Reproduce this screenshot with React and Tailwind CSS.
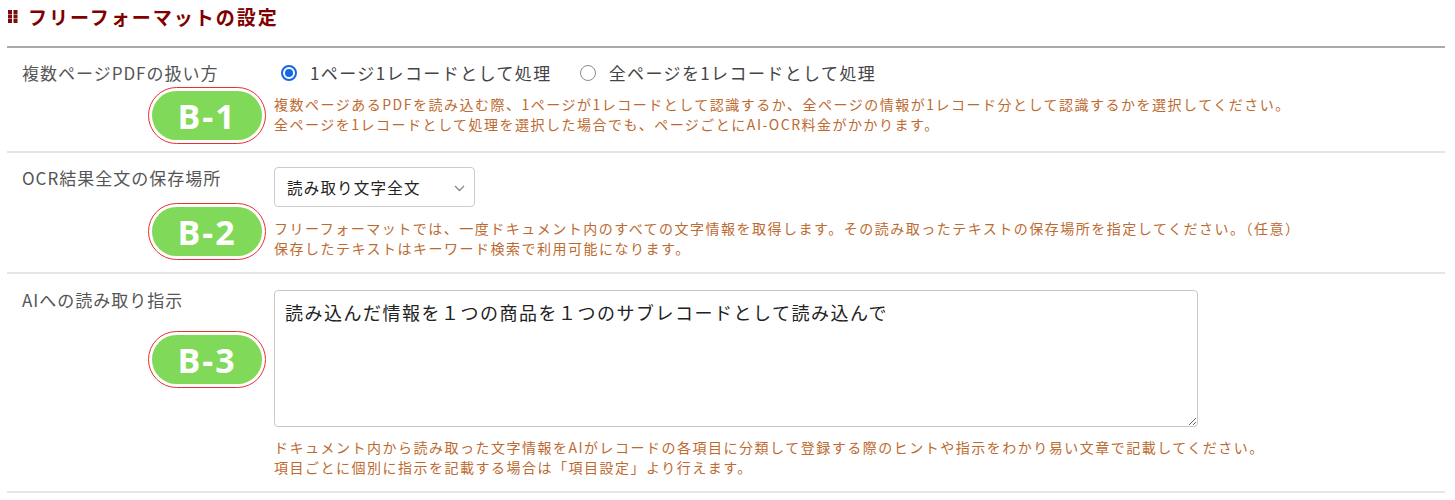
import React from "react";

const jp = { fontFamily: '"Noto Sans CJK JP", "Noto Sans", sans-serif' };

const Badge = ({ label, top }) => (
  <div
    className="absolute left-[141px] rounded-full border-[1.5px] border-[#e8322f] bg-white p-[3px]"
    style={{ top }}
  >
    <div className="flex h-[49px] w-[110px] items-center justify-center rounded-full bg-[#80d959]">
      <span
        className="text-[34px] font-bold leading-none tracking-[2px] text-white"
        style={{ fontFamily: '"Open Sans", "Liberation Sans", sans-serif' }}
      >
        {label}
      </span>
    </div>
  </div>
);

const Radio = ({ checked, children }) => (
  <label className="flex items-center">
    {checked ? (
      <span className="flex h-[16px] w-[16px] items-center justify-center rounded-full border-2 border-[#1467e6]">
        <span className="h-[8px] w-[8px] rounded-full bg-[#1467e6]" />
      </span>
    ) : (
      <span className="h-[16px] w-[16px] rounded-full border-[1.5px] border-[#8a8a8a]" />
    )}
    <span className="ml-[13px] text-[17px] leading-[26px] tracking-[1.4px] text-[#444]">
      {children}
    </span>
  </label>
);

const Help = ({ lines, className }) => (
  <div className={"text-[14px] leading-[20px] tracking-[1.5px] text-[#bd6a30] " + className}>
    {lines.map((l) => (
      <div key={l}>{l}</div>
    ))}
  </div>
);

const Row = ({ label, labelClass, badge, badgeTop, rowClass, children }) => (
  <div className={"relative flex border-b-2 border-[#e6e6e6] " + rowClass}>
    <div className="w-[267px] shrink-0 pl-[15px]">
      <div className={"text-[17px] leading-[22px] tracking-[1px] text-[#555] " + labelClass}>{label}</div>
    </div>
    <div className="flex-1">{children}</div>
    <Badge label={badge} top={badgeTop} />
  </div>
);

export default function App() {
  return (
    <div className="min-h-[500px] w-full bg-white" style={jp}>
      <div className="ml-[7px] w-[1438px]">
        <div className="flex h-[48px] items-start border-b-2 border-[#aaa] pt-[4px]">
          <svg width="10" height="13" viewBox="0 0 10 13" className="mt-[6px] ml-[1px]">
            {[0, 4.5, 9].map((y) =>
              [0, 5.5].map((x) => (
                <rect key={x + "-" + y} x={x} y={y} width="4" height="4" fill="#7a0d0d" />
              ))
            )}
          </svg>
          <h1 className="ml-[10px] text-[19px] font-bold leading-[26px] tracking-[2px] text-[#800000]">
            フリーフォーマットの設定
          </h1>
        </div>

        <Row label="複数ページPDFの扱い方" labelClass="mt-[2px]" badge="B-1" badgeTop={39} rowClass="pt-[12px] pb-[17px]">
          <div className="flex h-[26px] items-center pl-[7px]">
            <Radio checked>1ページ1レコードとして処理</Radio>
            <div className="w-[28px]" />
            <Radio>全ページを1レコードとして処理</Radio>
          </div>
          <Help
            className="mt-[8px]"
            lines={[
              "複数ページあるPDFを読み込む際、1ページが1レコードとして認識するか、全ページの情報が1レコード分として認識するかを選択してください。",
              "全ページを1レコードとして処理を選択した場合でも、ページごとにAI-OCR料金がかかります。",
            ]}
          />
        </Row>

        <Row label="OCR結果全文の保存場所" badge="B-2" badgeTop={50} rowClass="pt-[14px] pb-[14px]">
          <div className="relative h-[40px] w-[201px] rounded-[4px] border border-[#ccc] bg-white">
            <span className="absolute left-[12px] top-[8px] text-[15.5px] leading-[22px] tracking-[1.2px] text-[#222]">
              読み取り文字全文
            </span>
            <svg
              width="11"
              height="7"
              viewBox="0 0 11 7"
              className="absolute right-[9px] top-[17px]"
              fill="none"
              stroke="#888"
              strokeWidth="1.3"
            >
              <polyline points="1,1 5.5,5.5 10,1" />
            </svg>
          </div>
          <Help
            className="mt-[11px]"
            lines={[
              "フリーフォーマットでは、一度ドキュメント内のすべての文字情報を取得します。その読み取ったテキストの保存場所を指定してください。（任意）",
              "保存したテキストはキーワード検索で利用可能になります。",
            ]}
          />
        </Row>

        <Row label="AIへの読み取り指示" labelClass="mt-[-1px]" badge="B-3" badgeTop={57} rowClass="pt-[16px] pb-[14px]">
          <textarea
            readOnly
            defaultValue="読み込んだ情報を１つの商品を１つのサブレコードとして読み込んで"
            className="block h-[137px] w-[924px] rounded-[4px] border border-[#c8c8c8] px-[10px] py-[8px] text-[18px] leading-[26px] tracking-[1.5px] text-[#222] outline-none"
            style={jp}
          />
          <Help
            className="mt-[10px]"
            lines={[
              "ドキュメント内から読み取った文字情報をAIがレコードの各項目に分類して登録する際のヒントや指示をわかり易い文章で記載してください。",
              "項目ごとに個別に指示を記載する場合は「項目設定」より行えます。",
            ]}
          />
        </Row>
      </div>
    </div>
  );
}
